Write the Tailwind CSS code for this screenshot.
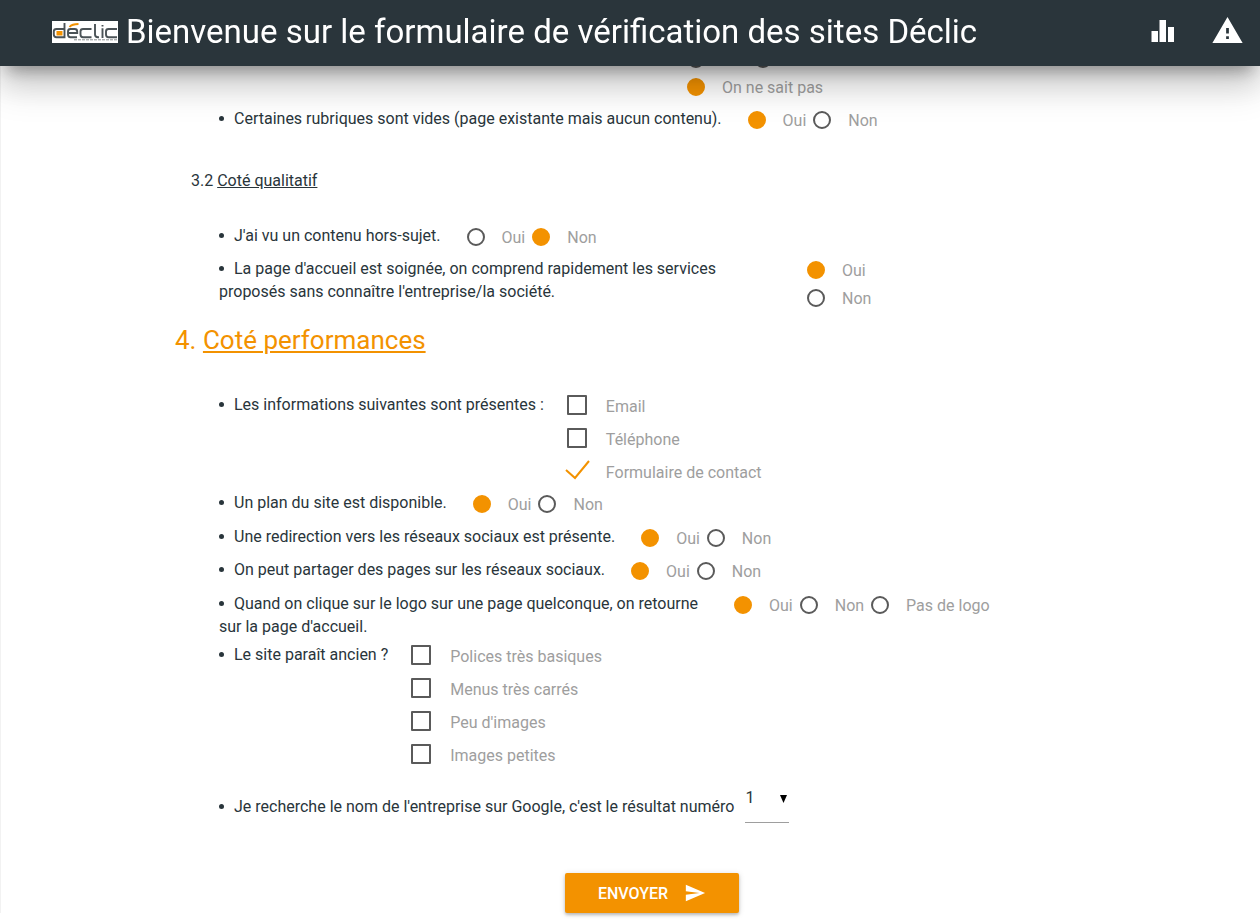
<!DOCTYPE html>
<html lang="fr">
<head>
<meta charset="utf-8">
<meta name="viewport" content="width=device-width, initial-scale=1">
<title>Vérification des sites Déclic</title>
<script src="https://cdn.jsdelivr.net/npm/@tailwindcss/browser@4"></script>
</head>
<body class="bg-white font-['Roboto',sans-serif] font-normal text-[16px] leading-[23px] text-[#29353b] overflow-x-hidden">
<header class="fixed inset-x-0 top-0 z-10 flex h-[66px] items-center justify-between bg-[#2a353b] pl-[52px] pr-4 pb-[2px] text-white shadow-[0_24px_36px_0_rgba(0,0,0,0.12),0_10px_34px_4px_rgba(0,0,0,0.14),0_12px_16px_-8px_rgba(0,0,0,0.32)]">
  <div class="flex items-center gap-2">
    <svg class="h-[22px] w-[66px]" viewBox="0 0 66 22" role="img" aria-label="Déclic">
      <rect width="66" height="22" fill="#fff"/>
      <g fill="none" stroke="#4b5357" stroke-width="1.9">
        <path d="M12.500 2v14.200H4.500Q1.800 16.200 1.800 13.500V10.500Q1.800 8 4.500 8H12"/>
        <path d="M16 12h9.200V10.500Q25.200 8 22.700 8H18.500Q16 8 16 10.500V13.500Q16 16.200 18.500 16.200H25"/>
        <path d="M39.500 8H31Q28.500 8 28.500 10.500V13.500Q28.500 16.200 31 16.200H39.500"/>
        <path d="M43 3V13.500Q43 16.200 46 16.200H47M50.500 7.200V16.900M50.500 4V5.600"/>
        <path d="M65 8H56.500Q54 8 54 10.500V13.500Q54 16.200 56.500 16.200H65"/>
      </g>
      <rect x="4.500" y="10" width="6" height="4.500" fill="#f39200"/>
      <path d="M17.500 6Q20 3 26.500 3" fill="none" stroke="#f39200" stroke-width="1.800"/>
      <path d="M22 18.800H65" stroke="#8b8f91" stroke-width="1" stroke-dasharray="3 1"/>
    </svg>
    <h1 class="text-[33px] font-normal leading-[62px] whitespace-nowrap">Bienvenue sur le formulaire de vérification des sites Déclic</h1>
  </div>
  <nav class="flex items-center gap-8">
    <a href="#stats" aria-label="Statistiques"><svg class="h-[33px] w-[33px]" viewBox="0 0 33 33" fill="#fff"><path d="M5.500 15h6.500v11H5.500zM13.500 4h6.500v22h-6.500zM22 11h6v15h-6z"/></svg></a>
    <a href="#alertes" aria-label="Alertes"><svg class="h-[33px] w-[33px]" viewBox="0 1.300 24 24" fill="#fff"><path d="M1 21h22L12 2 1 21zm12-3h-2v-2h2v2zm0-4h-2v-4h2v4z"/></svg></a>
  </nav>
</header>

<main class="border-l border-[#f2f2f2] pl-[174px] pr-4 pt-12">
 <form>
  <div class="pl-11">
    <fieldset class="ml-[468px] grid w-fit gap-[5px] text-[#9e9e9e]" aria-label="Contenu">
      <div class="flex gap-2">
        <label class="flex items-center gap-[17px]"><input type="radio" name="q0" class="mb-px size-[18px] appearance-none rounded-full border-2 border-[#5a5a5a] checked:border-[#f39200] checked:bg-[#f39200]">Oui</label>
        <label class="flex items-center gap-[17px]"><input type="radio" name="q0" class="mb-px size-[18px] appearance-none rounded-full border-2 border-[#5a5a5a] checked:border-[#f39200] checked:bg-[#f39200]">Non</label>
      </div>
      <label class="flex items-center gap-[17px]"><input type="radio" name="q0" checked class="mb-px size-[18px] appearance-none rounded-full border-2 border-[#5a5a5a] checked:border-[#f39200] checked:bg-[#f39200]">On ne sait pas</label>
    </fieldset>
    <fieldset class="mt-2 flex min-h-[33px] gap-[26px]">
      <ul><li class="before:mr-[10px] before:mb-[2px] before:inline-block before:size-[5px] before:rounded-full before:bg-[#29353b] before:align-middle">Certaines rubriques sont vides (page existante mais aucun contenu).</li></ul>
      <div class="flex items-start gap-[7px] pt-[2px] text-[#9e9e9e]">
        <label class="flex items-center gap-[17px]"><input type="radio" name="q1" checked class="mb-px size-[18px] appearance-none rounded-full border-2 border-[#5a5a5a] checked:border-[#f39200] checked:bg-[#f39200]">Oui</label>
        <label class="flex items-center gap-[17px]"><input type="radio" name="q1" class="mb-px size-[18px] appearance-none rounded-full border-2 border-[#5a5a5a] checked:border-[#f39200] checked:bg-[#f39200]">Non</label>
      </div>
    </fieldset>
  </div>

  <h3 class="mt-[29px] ml-4">3.2 <span class="underline">Coté qualitatif</span></h3>

  <div class="mt-8 pl-11">
    <fieldset class="flex min-h-[33px] gap-[26px]">
      <ul><li class="before:mr-[10px] before:mb-[2px] before:inline-block before:size-[5px] before:rounded-full before:bg-[#29353b] before:align-middle">J'ai vu un contenu hors-sujet.</li></ul>
      <div class="flex items-start gap-[7px] pt-[2px] text-[#9e9e9e]">
        <label class="flex items-center gap-[17px]"><input type="radio" name="q2" class="mb-px size-[18px] appearance-none rounded-full border-2 border-[#5a5a5a] checked:border-[#f39200] checked:bg-[#f39200]">Oui</label>
        <label class="flex items-center gap-[17px]"><input type="radio" name="q2" checked class="mb-px size-[18px] appearance-none rounded-full border-2 border-[#5a5a5a] checked:border-[#f39200] checked:bg-[#f39200]">Non</label>
      </div>
    </fieldset>
    <fieldset class="flex min-h-[51px] gap-7">
      <ul class="w-[560px]"><li class="before:mr-[10px] before:mb-[2px] before:inline-block before:size-[5px] before:rounded-full before:bg-[#29353b] before:align-middle">La page d'accueil est soignée, on comprend rapidement les services<br>proposés sans connaître l'entreprise/la société.</li></ul>
      <div class="grid gap-[5px] pt-[2px] text-[#9e9e9e]">
        <label class="flex items-center gap-[17px]"><input type="radio" name="q3" checked class="mb-px size-[18px] appearance-none rounded-full border-2 border-[#5a5a5a] checked:border-[#f39200] checked:bg-[#f39200]">Oui</label>
        <label class="flex items-center gap-[17px]"><input type="radio" name="q3" class="mb-px size-[18px] appearance-none rounded-full border-2 border-[#5a5a5a] checked:border-[#f39200] checked:bg-[#f39200]">Non</label>
      </div>
    </fieldset>
  </div>

  <h2 class="mt-[14px] text-[26px] leading-8 font-normal text-[#f39200]">4. <span class="underline">Coté performances</span></h2>

  <div class="mt-[37px] pl-11">
    <fieldset class="flex h-[98px] gap-[23px]">
      <ul><li class="before:mr-[10px] before:mb-[2px] before:inline-block before:size-[5px] before:rounded-full before:bg-[#29353b] before:align-middle">Les informations suivantes sont présentes :</li></ul>
      <div class="grid auto-rows-[33px] text-[#9e9e9e]">
        <label class="flex items-start gap-[19px] pt-[2px]"><input type="checkbox" name="email" class="size-5 appearance-none rounded-[1px] border-2 border-[#5a5a5a]">Email</label>
        <label class="flex items-start gap-[19px] pt-[2px]"><input type="checkbox" name="tel" class="size-5 appearance-none rounded-[1px] border-2 border-[#5a5a5a]">Téléphone</label>
        <label class="relative flex items-start gap-[19px] pt-[2px]"><input type="checkbox" name="formulaire" checked class="size-5 appearance-none"><svg class="absolute -left-[2px] top-0 h-[22px] w-[26px]" viewBox="0 0 26 22" fill="none" stroke="#f39200" stroke-width="2"><path d="M1 11l9 8L24 2"/></svg>Formulaire de contact</label>
      </div>
    </fieldset>
    <fieldset class="flex min-h-[34px] gap-[26px]">
      <ul><li class="before:mr-[10px] before:mb-[2px] before:inline-block before:size-[5px] before:rounded-full before:bg-[#29353b] before:align-middle">Un plan du site est disponible.</li></ul>
      <div class="flex items-start gap-[7px] pt-[2px] text-[#9e9e9e]">
        <label class="flex items-center gap-[17px]"><input type="radio" name="q5" checked class="mb-px size-[18px] appearance-none rounded-full border-2 border-[#5a5a5a] checked:border-[#f39200] checked:bg-[#f39200]">Oui</label>
        <label class="flex items-center gap-[17px]"><input type="radio" name="q5" class="mb-px size-[18px] appearance-none rounded-full border-2 border-[#5a5a5a] checked:border-[#f39200] checked:bg-[#f39200]">Non</label>
      </div>
    </fieldset>
    <fieldset class="flex min-h-[33px] gap-[26px]">
      <ul><li class="before:mr-[10px] before:mb-[2px] before:inline-block before:size-[5px] before:rounded-full before:bg-[#29353b] before:align-middle">Une redirection vers les réseaux sociaux est présente.</li></ul>
      <div class="flex items-start gap-[7px] pt-[2px] text-[#9e9e9e]">
        <label class="flex items-center gap-[17px]"><input type="radio" name="q6" checked class="mb-px size-[18px] appearance-none rounded-full border-2 border-[#5a5a5a] checked:border-[#f39200] checked:bg-[#f39200]">Oui</label>
        <label class="flex items-center gap-[17px]"><input type="radio" name="q6" class="mb-px size-[18px] appearance-none rounded-full border-2 border-[#5a5a5a] checked:border-[#f39200] checked:bg-[#f39200]">Non</label>
      </div>
    </fieldset>
    <fieldset class="flex min-h-[34px] gap-[26px]">
      <ul><li class="before:mr-[10px] before:mb-[2px] before:inline-block before:size-[5px] before:rounded-full before:bg-[#29353b] before:align-middle">On peut partager des pages sur les réseaux sociaux.</li></ul>
      <div class="flex items-start gap-[7px] pt-[2px] text-[#9e9e9e]">
        <label class="flex items-center gap-[17px]"><input type="radio" name="q7" checked class="mb-px size-[18px] appearance-none rounded-full border-2 border-[#5a5a5a] checked:border-[#f39200] checked:bg-[#f39200]">Oui</label>
        <label class="flex items-center gap-[17px]"><input type="radio" name="q7" class="mb-px size-[18px] appearance-none rounded-full border-2 border-[#5a5a5a] checked:border-[#f39200] checked:bg-[#f39200]">Non</label>
      </div>
    </fieldset>
    <fieldset class="flex min-h-[51px] gap-7">
      <ul class="w-[487px]"><li class="before:mr-[10px] before:mb-[2px] before:inline-block before:size-[5px] before:rounded-full before:bg-[#29353b] before:align-middle">Quand on clique sur le logo sur une page quelconque, on retourne<br>sur la page d'accueil.</li></ul>
      <div class="flex items-start gap-[7px] pt-[2px] text-[#9e9e9e]">
        <label class="flex items-center gap-[17px]"><input type="radio" name="q8" checked class="mb-px size-[18px] appearance-none rounded-full border-2 border-[#5a5a5a] checked:border-[#f39200] checked:bg-[#f39200]">Oui</label>
        <label class="flex items-center gap-[17px]"><input type="radio" name="q8" class="mb-px size-[18px] appearance-none rounded-full border-2 border-[#5a5a5a] checked:border-[#f39200] checked:bg-[#f39200]">Non</label>
        <label class="flex items-center gap-[17px]"><input type="radio" name="q8" class="mb-px size-[18px] appearance-none rounded-full border-2 border-[#5a5a5a] checked:border-[#f39200] checked:bg-[#f39200]">Pas de logo</label>
      </div>
    </fieldset>
    <fieldset class="flex h-[130px] gap-[23px]">
      <ul><li class="before:mr-[10px] before:mb-[2px] before:inline-block before:size-[5px] before:rounded-full before:bg-[#29353b] before:align-middle">Le site paraît ancien ?</li></ul>
      <div class="grid auto-rows-[33px] text-[#9e9e9e]">
        <label class="flex items-start gap-[19px] pt-[2px]"><input type="checkbox" name="polices" class="size-5 appearance-none rounded-[1px] border-2 border-[#5a5a5a]">Polices très basiques</label>
        <label class="flex items-start gap-[19px] pt-[2px]"><input type="checkbox" name="menus" class="size-5 appearance-none rounded-[1px] border-2 border-[#5a5a5a]">Menus très carrés</label>
        <label class="flex items-start gap-[19px] pt-[2px]"><input type="checkbox" name="peu" class="size-5 appearance-none rounded-[1px] border-2 border-[#5a5a5a]">Peu d'images</label>
        <label class="flex items-start gap-[19px] pt-[2px]"><input type="checkbox" name="petites" class="size-5 appearance-none rounded-[1px] border-2 border-[#5a5a5a]">Images petites</label>
      </div>
    </fieldset>
    <div class="flex items-end gap-[11px]">
      <ul class="mb-[5px]"><li class="before:mr-[10px] before:mb-[2px] before:inline-block before:size-[5px] before:rounded-full before:bg-[#29353b] before:align-middle"><label for="rang">Je recherche le nom de l'entreprise sur Google, c'est le résultat numéro</label></li></ul>
      <div class="relative">
        <select id="rang" class="block h-[50px] w-11 appearance-none border-b border-[#9e9e9e] bg-transparent"><option>1</option><option>2</option><option>3</option></select>
        <svg class="pointer-events-none absolute right-[2px] top-[22px] h-2 w-[7px]" viewBox="0 0 7 8"><path d="M0 0h7L3.500 8z"/></svg>
      </div>
    </div>
  </div>

  <div class="mt-[50px] mb-[6px] pl-[390px]">
    <button type="submit" class="flex h-10 w-[174px] items-center justify-center gap-4 rounded-[2px] bg-[#f39200] text-[16px] font-medium text-white shadow-[0_2px_3px_rgba(0,0,0,0.2),0_1px_6px_rgba(0,0,0,0.14)]">ENVOYER
      <svg class="h-[22px] w-[22px]" viewBox="0 0 24 24" fill="#fff"><path d="M2.010 21L23 12 2.010 3 2 10l15 2-15 2z"/></svg>
    </button>
  </div>
 </form>
</main>
</body>
</html>
